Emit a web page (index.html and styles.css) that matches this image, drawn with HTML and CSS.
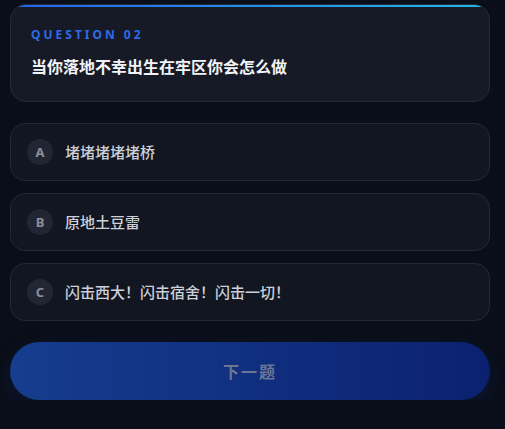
FILE: index.html
```html
<!DOCTYPE html>
<html lang="zh-CN">
<head>
    <meta charset="UTF-8">
    <meta name="viewport" content="width=device-width, initial-scale=1.0">
    <title>Quiz</title>
    <link rel="stylesheet" href="styles.css">
</head>
<body>
    <div class="quiz">
        <div class="question-card">
            <div class="question-label">QUESTION 02</div>
            <div class="question-text">当你落地不幸出生在牢区你会怎么做</div>
        </div>

        <div class="options">
            <div class="option">
                <span class="option-key">A</span>
                <span class="option-text">堵堵堵堵堵桥</span>
            </div>
            <div class="option">
                <span class="option-key">B</span>
                <span class="option-text">原地土豆雷</span>
            </div>
            <div class="option">
                <span class="option-key">C</span>
                <span class="option-text">闪击西大！闪击宿舍！闪击一切！</span>
            </div>
        </div>

        <button class="next-btn" disabled>下一题</button>
    </div>
</body>
</html>
```

FILE: styles.css
```css
html, body {
    margin: 0;
    padding: 0;
    background-color: #0a0e18;
}
body {
    font-family: "Noto Sans", "Noto Sans CJK SC", sans-serif;
    color: #e6e8ee;
}
.quiz {
    padding: 4px 15px 0 10px;
    display: flex;
    flex-direction: column;
}
.question-card {
    position: relative;
    overflow: hidden;
    background-color: #161a26;
    border: 1px solid #262b39;
    border-radius: 16px;
    padding: 22px 20px 0 20px;
    height: 74px;
}
.question-card::before {
    content: "";
    position: absolute;
    top: 0;
    left: 0;
    right: 0;
    height: 2px;
    background: linear-gradient(90deg, #2563eb, #22b8e6);
}
.question-label {
    font-size: 12px;
    font-weight: 700;
    letter-spacing: 3px;
    color: #2f6ae8;
    line-height: 16px;
}
.question-text {
    margin-top: 13px;
    font-size: 16px;
    font-weight: 700;
    color: #f2f3f6;
    line-height: 22px;
}
.options {
    margin-top: 21px;
    display: flex;
    flex-direction: column;
    gap: 12px;
}
.option {
    height: 56px;
    display: flex;
    align-items: center;
    gap: 12px;
    padding: 0 16px;
    background-color: #121621;
    border: 1px solid #242938;
    border-radius: 15px;
}
.option-key {
    width: 26px;
    height: 26px;
    border-radius: 50%;
    background-color: #222632;
    color: #8b909c;
    font-size: 13px;
    font-weight: 700;
    display: flex;
    align-items: center;
    justify-content: center;
}
.option-text {
    font-size: 15px;
    font-weight: 500;
    color: #cdd0d8;
    margin-top: -2px;
}
.next-btn {
    margin-top: 21px;
    height: 58px;
    border: none;
    border-radius: 29px;
    background: linear-gradient(90deg, #163d8e, #0b2170);
    color: #6a7896;
    font-family: "Noto Sans", "Noto Sans CJK SC", sans-serif;
    font-size: 16px;
    font-weight: 700;
    letter-spacing: 2px;
    box-shadow: 0 6px 20px rgba(20, 50, 130, 0.25);
}
```
